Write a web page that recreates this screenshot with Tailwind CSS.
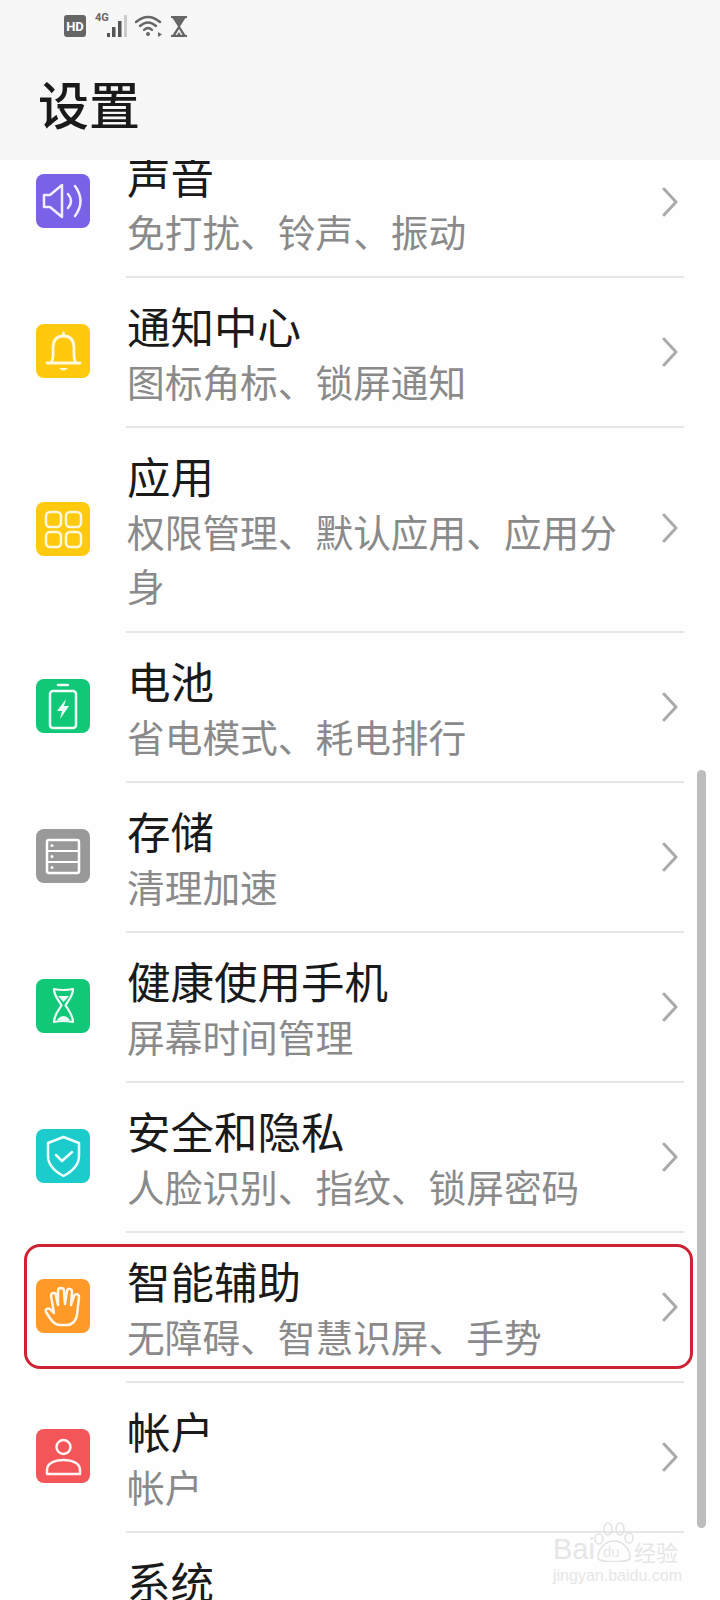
<!DOCTYPE html>
<html lang="zh-CN">
<head>
  <meta charset="UTF-8" />
  <meta name="viewport" content="width=device-width, initial-scale=1.0" />
  <title>设置</title>
  <script src="https://cdn.jsdelivr.net/npm/@tailwindcss/browser@4"></script>
</head>
<body class="bg-white font-['Noto_Sans_CJK_SC','Noto_Sans',sans-serif]">
  <div class="relative w-[720px] h-[1600px] overflow-hidden bg-[#fefefe]">

    <!-- Header -->
    <header class="relative z-10 h-[160px] bg-[#f7f7f7]">
      <div class="flex items-center h-[50px] pl-[64px] pt-[2px] text-[#666]">
        <span class="flex items-center justify-center w-[22px] h-[22px] rounded-[3px] bg-[#666] text-white text-[13px] leading-none font-bold font-['Roboto',sans-serif]">HD</span>
        <span class="w-[36px] ml-[7px] h-[22px] relative">
          <span class="absolute left-[2px] top-[-3px] text-[11px] leading-none font-bold font-['Roboto',sans-serif]">4G</span>
          <svg width="36" height="24" viewBox="0 0 36 24" class="absolute left-0 top-[-1px]">
            <rect x="14" y="19" width="3" height="4" fill="#555"/>
            <rect x="19" y="13" width="3.500" height="10" fill="#555"/>
            <rect x="25" y="7" width="3.500" height="16" fill="#555"/>
            <rect x="31" y="1" width="3" height="22" fill="#ccc"/>
          </svg>
        </span>
        <svg width="28" height="24" viewBox="0 0 28 24" class="ml-[6px]" fill="none" stroke="#666" stroke-width="2.400" stroke-linecap="round">
          <path d="M1 8 Q13 -2 25 8"/>
          <path d="M5 12 Q13 5 21 12"/>
          <path d="M9 16 Q13 12 17 16"/>
          <circle cx="13" cy="20" r="2" fill="#666" stroke="none"/>
          <path d="M23 18 L27 20.500 L23 23 Z" fill="#666" stroke="none"/>
        </svg>
        <svg width="18" height="23" viewBox="0 0 18 23" class="ml-[7px]">
          <path d="M1 1 H17 V3 H15.500 L10 11.500 L15.500 20 H17 V22 H1 V20 H2.500 L8 11.500 L2.500 3 H1 Z" fill="#666"/>
          <path d="M9 14 L12.500 20 H5.500 Z" fill="#f7f7f7"/>
          <path d="M9 17 L11 20 H7 Z" fill="#666"/>
        </svg>
      </div>
      <h1 class="pl-[38px] pt-[17px] text-[51px] leading-[72px] font-medium text-[#1a1a1a]">设置</h1>
    </header>

    <!-- List -->
    <main class="mt-[-32px]">
      <!-- 声音 -->
      <div class="flex pl-[36px]">
        <div class="flex items-center mr-[36px] pb-[4px]">
          <svg width="54" height="54" viewBox="0 0 54 54" fill="none" stroke="#f3edff" stroke-width="2.500" stroke-linecap="round" stroke-linejoin="round">
            <rect width="54" height="54" rx="8" fill="#7b61e8" stroke="none"/>
            <path d="M8 21 H14 L26 11 V43 L14 33 H8 Z"/>
            <path d="M32 20 Q38 27 32 34"/>
            <path d="M39 12 Q50 27 39 42"/>
          </svg>
        </div>
        <div class="flex-1 mr-[36px] h-[150px] pt-[20px] flex border-b-2 border-[#e6e6e6]">
          <div class="w-[500px] pl-[1px]">
            <p class="text-[43.500px] leading-[56px] text-[#1a1a1a]">声音</p>
            <p class="text-[37.700px] leading-[54px] text-[#8a8a8a]">免打扰、铃声、振动</p>
          </div>
          <svg width="18" height="30" viewBox="0 0 18 30" class="ml-auto mr-[5px] mt-[39px]" fill="none" stroke="#aaa" stroke-width="3" stroke-linecap="round" stroke-linejoin="round"><path d="M3 2 L15 15 L3 28"/></svg>
        </div>
      </div>

      <!-- 通知中心 -->
      <div class="flex pl-[36px]">
        <div class="flex items-center mr-[36px] pb-[4px]">
          <svg width="54" height="54" viewBox="0 0 54 54" fill="none" stroke="#fff8dc" stroke-width="2.800" stroke-linecap="round" stroke-linejoin="round">
            <rect width="54" height="54" rx="8" fill="#ffc90e" stroke="none"/>
            <path d="M11 39 H44"/>
            <path d="M15 39 C18 35 17 30 17 24 C17 16 21 12 27.500 12 C34 12 38 16 38 24 C38 30 37 35 40 39"/>
            <path d="M27.500 9 V11"/>
            <path d="M23 44 H32 Q27.500 49 23 44 Z" fill="#fff8dc" stroke="none"/>
          </svg>
        </div>
        <div class="flex-1 mr-[36px] h-[150px] pt-[20px] flex border-b-2 border-[#e6e6e6]">
          <div class="w-[500px] pl-[1px]">
            <p class="text-[43.500px] leading-[56px] text-[#1a1a1a]">通知中心</p>
            <p class="text-[37.700px] leading-[54px] text-[#8a8a8a]">图标角标、锁屏通知</p>
          </div>
          <svg width="18" height="30" viewBox="0 0 18 30" class="ml-auto mr-[5px] mt-[39px]" fill="none" stroke="#aaa" stroke-width="3" stroke-linecap="round" stroke-linejoin="round"><path d="M3 2 L15 15 L3 28"/></svg>
        </div>
      </div>

      <!-- 应用 -->
      <div class="flex pl-[36px]">
        <div class="flex items-center mr-[36px] pb-[4px]">
          <svg width="54" height="54" viewBox="0 0 54 54" fill="none" stroke="#fff8dc" stroke-width="2.500">
            <rect width="54" height="54" rx="8" fill="#ffc90e" stroke="none"/>
            <rect x="10" y="10" width="15" height="15" rx="4"/>
            <rect x="30" y="10" width="15" height="15" rx="4"/>
            <rect x="10" y="30" width="15" height="15" rx="4"/>
            <rect x="30" y="30" width="15" height="15" rx="4"/>
          </svg>
        </div>
        <div class="flex-1 mr-[36px] h-[205px] pt-[20px] flex border-b-2 border-[#e6e6e6]">
          <div class="w-[500px] pl-[1px]">
            <p class="text-[43.500px] leading-[56px] text-[#1a1a1a]">应用</p>
            <p class="text-[37.700px] leading-[54px] text-[#8a8a8a]">权限管理、默认应用、应用分身</p>
          </div>
          <svg width="18" height="30" viewBox="0 0 18 30" class="ml-auto mr-[5px] mt-[65px]" fill="none" stroke="#aaa" stroke-width="3" stroke-linecap="round" stroke-linejoin="round"><path d="M3 2 L15 15 L3 28"/></svg>
        </div>
      </div>

      <!-- 电池 -->
      <div class="flex pl-[36px]">
        <div class="flex items-center mr-[36px] pb-[4px]">
          <svg width="54" height="54" viewBox="0 0 54 54" fill="none" stroke="#f0fff8" stroke-width="2.500" stroke-linecap="round" stroke-linejoin="round">
            <rect width="54" height="54" rx="8" fill="#10c878" stroke="none"/>
            <path d="M22 6 H32"/>
            <rect x="14" y="12" width="26" height="37" rx="3"/>
            <path d="M30 20 L21 32 H26 L24 40 L33 27 H28 Z" fill="#f0fff8" stroke="none"/>
          </svg>
        </div>
        <div class="flex-1 mr-[36px] h-[150px] pt-[20px] flex border-b-2 border-[#e6e6e6]">
          <div class="w-[500px] pl-[1px]">
            <p class="text-[43.500px] leading-[56px] text-[#1a1a1a]">电池</p>
            <p class="text-[37.700px] leading-[54px] text-[#8a8a8a]">省电模式、耗电排行</p>
          </div>
          <svg width="18" height="30" viewBox="0 0 18 30" class="ml-auto mr-[5px] mt-[39px]" fill="none" stroke="#aaa" stroke-width="3" stroke-linecap="round" stroke-linejoin="round"><path d="M3 2 L15 15 L3 28"/></svg>
        </div>
      </div>

      <!-- 存储 -->
      <div class="flex pl-[36px]">
        <div class="flex items-center mr-[36px] pb-[4px]">
          <svg width="54" height="54" viewBox="0 0 54 54" fill="none" stroke="#fff" stroke-width="2.500">
            <rect width="54" height="54" rx="8" fill="#999" stroke="none"/>
            <rect x="11" y="11" width="32" height="33" rx="2"/>
            <path d="M11 22 H43 M11 33 H43" stroke-width="2"/>
            <circle cx="16" cy="16.500" r="1.500" fill="#fff" stroke="none"/>
            <circle cx="16" cy="27.500" r="1.500" fill="#fff" stroke="none"/>
            <circle cx="16" cy="38.500" r="1.500" fill="#fff" stroke="none"/>
          </svg>
        </div>
        <div class="flex-1 mr-[36px] h-[150px] pt-[20px] flex border-b-2 border-[#e6e6e6]">
          <div class="w-[500px] pl-[1px]">
            <p class="text-[43.500px] leading-[56px] text-[#1a1a1a]">存储</p>
            <p class="text-[37.700px] leading-[54px] text-[#8a8a8a]">清理加速</p>
          </div>
          <svg width="18" height="30" viewBox="0 0 18 30" class="ml-auto mr-[5px] mt-[39px]" fill="none" stroke="#aaa" stroke-width="3" stroke-linecap="round" stroke-linejoin="round"><path d="M3 2 L15 15 L3 28"/></svg>
        </div>
      </div>

      <!-- 健康使用手机 -->
      <div class="flex pl-[36px]">
        <div class="flex items-center mr-[36px] pb-[4px]">
          <svg width="54" height="54" viewBox="0 0 54 54" fill="none" stroke="#f0fff8" stroke-width="2.200" stroke-linecap="round" stroke-linejoin="round">
            <rect width="54" height="54" rx="8" fill="#10c878" stroke="none"/>
            <path d="M18 10 Q27 12 37 10 C37 17 33 20 29.500 26.500 C33 32 37 36 37 43 Q27 41 18 43 C18 36 22 32 25.500 26.500 C22 20 18 17 18 10 Z"/>
            <path d="M22 17 H33 L27.500 23 Z" fill="#f0fff8" stroke="none"/>
            <path d="M21 41 Q27.500 33 34 41 Z" fill="#f0fff8" stroke="none"/>
          </svg>
        </div>
        <div class="flex-1 mr-[36px] h-[150px] pt-[20px] flex border-b-2 border-[#e6e6e6]">
          <div class="w-[500px] pl-[1px]">
            <p class="text-[43.500px] leading-[56px] text-[#1a1a1a]">健康使用手机</p>
            <p class="text-[37.700px] leading-[54px] text-[#8a8a8a]">屏幕时间管理</p>
          </div>
          <svg width="18" height="30" viewBox="0 0 18 30" class="ml-auto mr-[5px] mt-[39px]" fill="none" stroke="#aaa" stroke-width="3" stroke-linecap="round" stroke-linejoin="round"><path d="M3 2 L15 15 L3 28"/></svg>
        </div>
      </div>

      <!-- 安全和隐私 -->
      <div class="flex pl-[36px]">
        <div class="flex items-center mr-[36px] pb-[4px]">
          <svg width="54" height="54" viewBox="0 0 54 54" fill="none" stroke="#f0ffff" stroke-width="2.500" stroke-linecap="round" stroke-linejoin="round">
            <rect width="54" height="54" rx="8" fill="#1ccbcb" stroke="none"/>
            <path d="M27.500 8 L43 14 V27 C43 37 35 43 27.500 47 C20 43 12 37 12 27 V14 Z"/>
            <path d="M20 26 L26 32 L36 23"/>
          </svg>
        </div>
        <div class="flex-1 mr-[36px] h-[150px] pt-[20px] flex border-b-2 border-[#e6e6e6]">
          <div class="w-[500px] pl-[1px]">
            <p class="text-[43.500px] leading-[56px] text-[#1a1a1a]">安全和隐私</p>
            <p class="text-[37.700px] leading-[54px] text-[#8a8a8a]">人脸识别、指纹、锁屏密码</p>
          </div>
          <svg width="18" height="30" viewBox="0 0 18 30" class="ml-auto mr-[5px] mt-[39px]" fill="none" stroke="#aaa" stroke-width="3" stroke-linecap="round" stroke-linejoin="round"><path d="M3 2 L15 15 L3 28"/></svg>
        </div>
      </div>

      <!-- 智能辅助 (highlighted) -->
      <div class="relative flex pl-[36px]">
        <div class="flex items-center mr-[36px] pb-[4px]">
          <svg width="54" height="54" viewBox="0 0 54 54" fill="none" stroke="#fff6ea" stroke-width="2.500" stroke-linecap="round" stroke-linejoin="round">
            <rect width="54" height="54" rx="8" fill="#ff9a28" stroke="none"/>
            <path d="M24 46 C18 46 15 41 10 33 C9 30 12 28 15 31 L18 34 L15 17 C15 13 20 13 20 17 L22 26 L22 12 C22 8 28 8 28 12 L29 25 L31 12 C31 9 36 9 36 13 L35 26 L38 17 C39 14 43 15 43 18 L41 36 C40 42 36 46 31 46 Z"/>
          </svg>
        </div>
        <div class="flex-1 mr-[36px] h-[150px] pt-[20px] flex border-b-2 border-[#e6e6e6]">
          <div class="w-[500px] pl-[1px]">
            <p class="text-[43.500px] leading-[56px] text-[#1a1a1a]">智能辅助</p>
            <p class="text-[37.700px] leading-[54px] text-[#8a8a8a]">无障碍、智慧识屏、手势</p>
          </div>
          <svg width="18" height="30" viewBox="0 0 18 30" class="ml-auto mr-[5px] mt-[39px]" fill="none" stroke="#aaa" stroke-width="3" stroke-linecap="round" stroke-linejoin="round"><path d="M3 2 L15 15 L3 28"/></svg>
        </div>
        <div class="absolute left-[24px] top-[11px] w-[669px] h-[125px] rounded-[16px] border-[3px] border-[#cc2233]"></div>
      </div>

      <!-- 帐户 -->
      <div class="flex pl-[36px]">
        <div class="flex items-center mr-[36px] pb-[4px]">
          <svg width="54" height="54" viewBox="0 0 54 54" fill="none" stroke="#fff4f4" stroke-width="2.500" stroke-linejoin="round">
            <rect width="54" height="54" rx="8" fill="#f45558" stroke="none"/>
            <circle cx="27.500" cy="18" r="7"/>
            <path d="M11 45 V41 C11 34 19 31 27.500 31 C36 31 44 34 44 41 V45 Z"/>
          </svg>
        </div>
        <div class="flex-1 mr-[36px] h-[150px] pt-[20px] flex border-b-2 border-[#e6e6e6]">
          <div class="w-[500px] pl-[1px]">
            <p class="text-[43.500px] leading-[56px] text-[#1a1a1a]">帐户</p>
            <p class="text-[37.700px] leading-[54px] text-[#8a8a8a]">帐户</p>
          </div>
          <svg width="18" height="30" viewBox="0 0 18 30" class="ml-auto mr-[5px] mt-[39px]" fill="none" stroke="#aaa" stroke-width="3" stroke-linecap="round" stroke-linejoin="round"><path d="M3 2 L15 15 L3 28"/></svg>
        </div>
      </div>

      <!-- 系统 -->
      <div class="flex pl-[127px] h-[150px] pt-[20px]">
        <p class="text-[43.500px] leading-[56px] text-[#1a1a1a]">系统</p>
      </div>
    </main>

    <!-- Scrollbar -->
    <div class="absolute left-[697px] top-[770px] w-[9px] h-[758px] rounded-full bg-[#bdbdbd]"></div>

    <!-- Watermark -->
    <div class="absolute left-[553px] top-[1522px] w-[130px]">
      <svg width="44" height="40" viewBox="0 0 44 40" class="absolute left-[40px] top-0" fill="none" stroke="#e2e2e2" stroke-width="1.500">
        <ellipse cx="6" cy="17" rx="4" ry="5"/><ellipse cx="15" cy="7" rx="4" ry="6"/><ellipse cx="27" cy="7" rx="4" ry="6"/><ellipse cx="36" cy="16" rx="4" ry="5"/>
        <path d="M5 36 C5 26 13 19 21 19 C29 19 37 26 37 36 C37 41 5 41 5 36 Z"/>
      </svg>
      <div class="flex items-end h-[42px] whitespace-nowrap text-[29px] leading-[30px] font-['Liberation_Sans',sans-serif] text-[#e6e6e6]">
        <span>Bai</span><span class="text-[15px] leading-[24px] ml-[8px] w-[31px]">du</span><span class="text-[22px] leading-[26px] font-['Noto_Sans_CJK_SC',sans-serif]">经验</span>
      </div>
      <p class="mt-[3px] text-[16px] leading-[18px] whitespace-nowrap font-['Liberation_Sans',sans-serif] text-[#e6e6e6]">jingyan.baidu.com</p>
    </div>
  </div>
</body>
</html>
